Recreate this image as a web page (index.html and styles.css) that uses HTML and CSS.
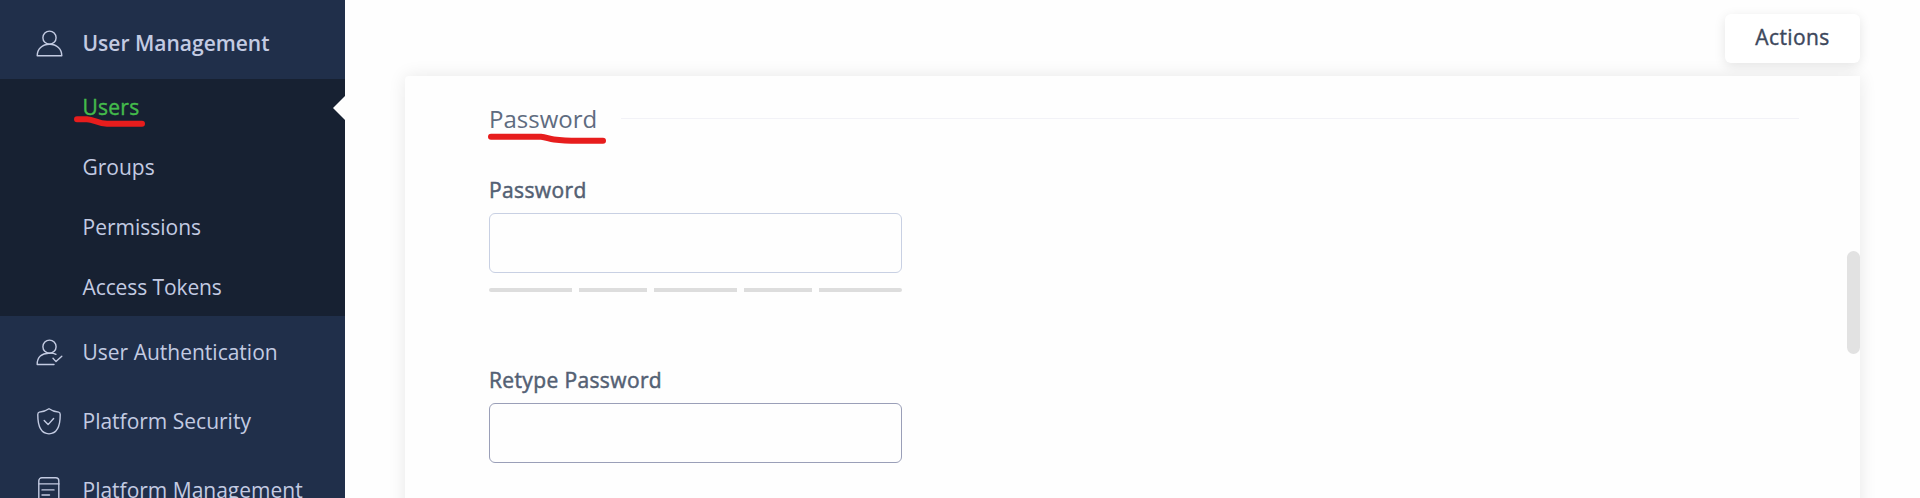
FILE: index.html
```
<!DOCTYPE html>
<html lang="en">
<head>
<meta charset="utf-8">
<title>User Management</title>
<link rel="stylesheet" href="styles.css">
</head>
<body>
<div class="app">
  <nav class="sidebar">
    <div class="nav-item nav-item--open">
      <svg class="nav-icon" viewBox="0 0 27 27"><circle cx="13.5" cy="7.7" r="6.6"/><path d="M1.2 25.7C1.2 19 6.2 14.3 13.5 14.3S25.800 19 25.800 25.700Z"/></svg>
      <span>User Management</span>
    </div>
    <div class="submenu">
      <a class="sub-item sub-item--active"><span>Users</span>
        <svg class="mark mark--users" viewBox="0 0 72 12"><path d="M3 3.200H13C20 3.500 24 7.500 33 7.700H68"/></svg>
      </a>
      <a class="sub-item">Groups</a>
      <a class="sub-item">Permissions</a>
      <a class="sub-item sub-item--tight">Access Tokens</a>
    </div>
    <div class="nav-item">
      <svg class="nav-icon" viewBox="0 0 27 27"><circle cx="13.500" cy="7.700" r="6.600"/><path d="M18 25.500H1.200C1 18 6 14.200 12.500 14.200C15.500 14 18 14.300 20 15.300M17 19.300L20 22.600L25.800 17.200"/></svg>
      <span>User Authentication</span>
    </div>
    <div class="nav-item">
      <svg class="nav-icon" viewBox="0 0 27 27"><path d="M13 .8C10 3 6 3.900 3.300 4.100C2 4.300 1.800 5 1.800 6.500C1.700 17 4 25.600 13 25.900C22 25.600 24.300 17 24.200 6.500C24.200 5 24 4.300 22.700 4.100C20 3.900 16 3 13 .8Z"/><path d="M8.200 12.500L12.100 16.600L17.600 10.500"/></svg>
      <span>Platform Security</span>
    </div>
    <div class="nav-item">
      <svg class="nav-icon" viewBox="0 0 27 27"><rect x="2.800" y=".8" width="20" height="26" rx="3"/><path d="M3 6.900H23M6 12.900H18M6 18H13.500M6 23H18"/></svg>
      <span>Platform Management</span>
    </div>
  </nav>
  <main class="content">
    <div class="toolbar"><button class="actions">Actions</button></div>
    <section class="panel">
      <div class="section-head">
        <h2>Password</h2>
        <svg class="mark mark--password" viewBox="0 0 120 14"><path d="M4 3.700H54C59 4 62 6 67 6.500Q77 7.700 91 7.800H116"/></svg>
      </div>
      <div class="field">
        <label for="pw">Password</label>
        <input id="pw" type="password">
        <div class="strength"><i></i><i></i><i></i><i></i><i></i></div>
      </div>
      <div class="field field--retype">
        <label for="pw2">Retype Password</label>
        <input id="pw2" type="password">
      </div>
      <div class="scroll-thumb"></div>
    </section>
  </main>
</div>
</body>
</html>
```
FILE: styles.css
```
* { box-sizing: border-box; }
body { margin: 0; background: #fefefe; font-family: "Open Sans", sans-serif; font-size: 21px; }
.app { display: flex; height: 498px; overflow: hidden; }
.sidebar { flex: none; width: 345px; height: 498px; overflow: hidden; background: #202f4a; color: #c3cbe2; }
.nav-item { display: flex; align-items: center; height: 69px; padding: 2px 0 0 36px; gap: 19.5px; white-space: nowrap; }
.nav-item .nav-icon { margin-top: 2px; }
.nav-item--open { height: 79px; padding-top: 8px; font-weight: 600; }
.nav-item--open .nav-icon { margin-top: 0; }
.nav-item--open span { padding-bottom: 2px; }
.nav-icon { flex: none; width: 27px; height: 27px; fill: none; stroke: #c3cbe2; stroke-width: 1.4; stroke-linecap: round; stroke-linejoin: round; }
.submenu { position: relative; display: flex; flex-direction: column; gap: 32px; height: 237px; padding: 14px 0 0 82.5px; background: #172132; }
.submenu::after { content: ""; position: absolute; right: 0; top: 17px; width: 12px; height: 24px; background: #fefefe; clip-path: polygon(100% 0, 100% 100%, 0 50%); }
.sub-item { position: relative; height: 28px; line-height: 28px; }
.sub-item--tight { letter-spacing: -.1px; }
.sub-item--active { color: #44bb4b; letter-spacing: .25px; -webkit-text-stroke: .4px #44bb4b; }
.mark { position: absolute; fill: none; stroke: #e71d1d; stroke-width: 6; stroke-linecap: round; stroke-linejoin: round; }
.mark--users { left: -8.5px; top: 23px; width: 72px; height: 12px; }
.content { flex: 1; display: flex; flex-direction: column; padding: 14px 60px 0 60px; }
.toolbar { position: relative; z-index: 1; flex: none; display: flex; align-items: flex-start; justify-content: flex-end; height: 62px; }
.actions { width: 135px; height: 49px; padding: 0 0 3px; border: 0; border-radius: 6px; background: #fff; color: #3d485c; font: 400 21px "Open Sans", sans-serif; letter-spacing: .4px; -webkit-text-stroke: .4px #3d485c; box-shadow: 0 3px 12px rgba(0,0,0,.1); }
.panel { position: relative; flex: none; height: 560px; padding: 28px 61px 0 84px; background: #fefefe; border-radius: 4px 0 0 0; box-shadow: 0 0 18px rgba(0,0,0,.09); }
.section-head { position: relative; display: flex; align-items: center; gap: 24px; height: 32px; }
.section-head::after { content: ""; flex: 1; height: 1px; margin-bottom: 3px; background: #f2f2f7; }
h2 { margin: 0 0 2px; font-size: 24px; line-height: 32px; font-weight: 400; color: #5f6c80; }
.mark--password { left: -2px; top: 29px; width: 120px; height: 14px; }
.field { width: 413px; margin-top: 40px; color: #536073; }
.field--retype { margin-top: 74px; }
label { display: block; height: 28px; line-height: 28px; letter-spacing: .37px; -webkit-text-stroke: .5px #536073; margin-bottom: 9px; }
input { display: block; width: 413px; height: 60px; padding: 0 16px; border: 1px solid #c8d0e3; border-radius: 6px; background: #fefefe; font: inherit; }
.field--retype input { border-color: #9a9fb8; }
.strength { display: grid; grid-template-columns: 83px 68px 83px 68px 83px; justify-content: space-between; margin-top: 15px; }
.strength i { height: 4px; background: #ddd; }
.strength i:first-child { border-radius: 2px 0 0 2px; }
.strength i:last-child { border-radius: 0 2px 2px 0; }
.scroll-thumb { position: absolute; right: 0; top: 175px; width: 13px; height: 103px; border-radius: 7px; background: #e2e2e2; }
```
